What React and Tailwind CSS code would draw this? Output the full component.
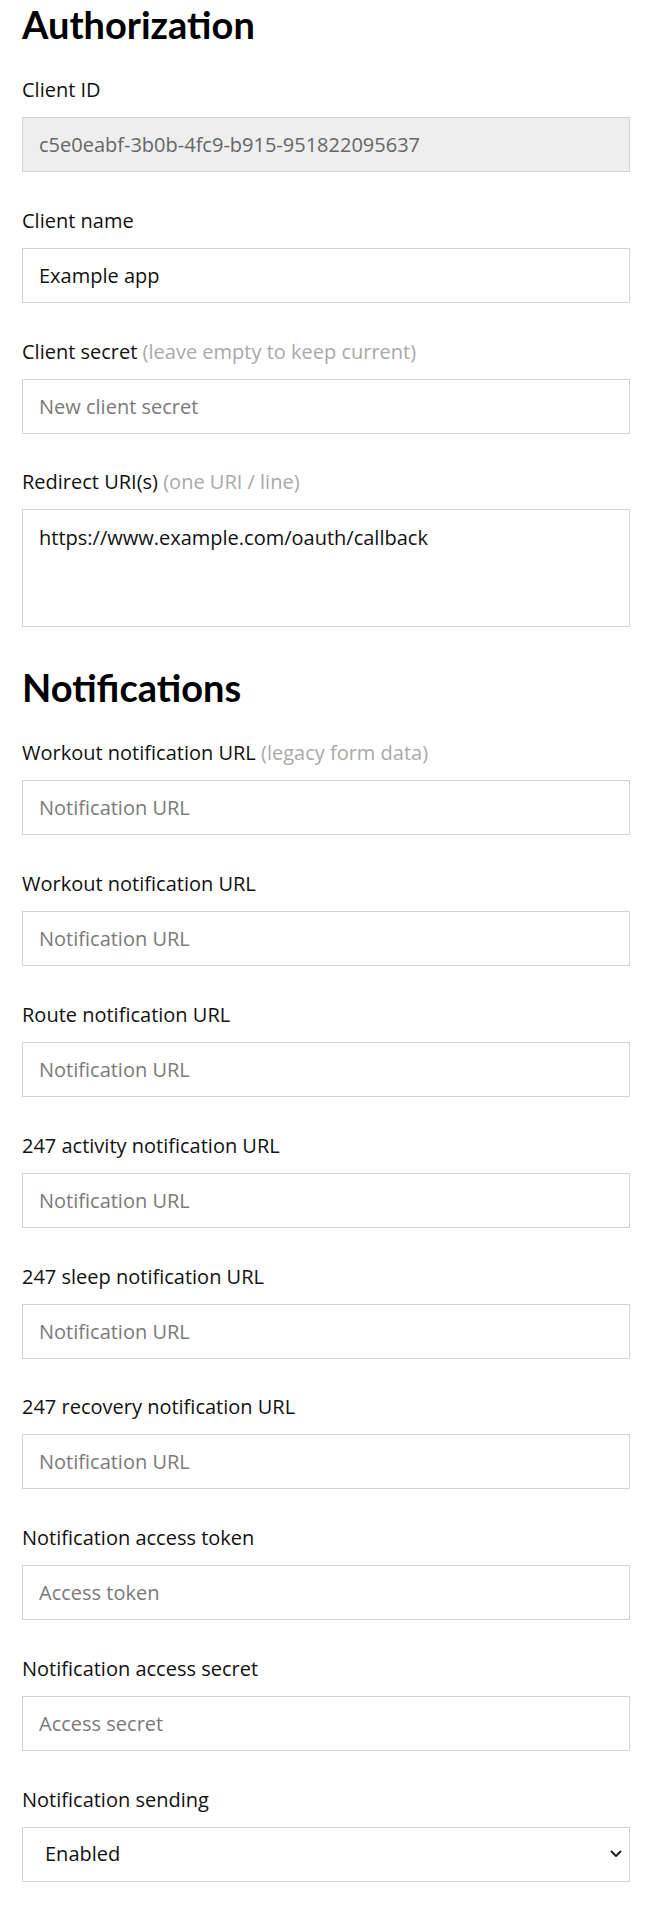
import React from "react";

const baseCls =
  "block w-full h-[55px] border border-[#d3d3d3] px-4 text-[20px] placeholder:text-[#7a7a7a] outline-none font-['Open_Sans',sans-serif]";

function Label({ children, hint }) {
  return (
    <label className="block leading-[30px] text-[20px] text-[#111]">
      {children}
      {hint ? <span className="text-[#a9a9a9]"> {hint}</span> : null}
    </label>
  );
}

function Field({ label, hint, placeholder, value, disabled }) {
  return (
    <div className="flex flex-col gap-3">
      <Label hint={hint}>{label}</Label>
      <input
        className={
          baseCls +
          (disabled ? " bg-[#eeeeee] text-[#666666]" : " bg-white text-[#111]")
        }
        placeholder={placeholder}
        defaultValue={value}
        readOnly={disabled}
      />
    </div>
  );
}

export default function App() {
  const notif = [
    { label: "Workout notification URL", hint: "(legacy form data)", placeholder: "Notification URL" },
    { label: "Workout notification URL", placeholder: "Notification URL" },
    { label: "Route notification URL", placeholder: "Notification URL" },
    { label: "247 activity notification URL", placeholder: "Notification URL" },
    { label: "247 sleep notification URL", placeholder: "Notification URL" },
    { label: "247 recovery notification URL", placeholder: "Notification URL" },
    { label: "Notification access token", placeholder: "Access token" },
    { label: "Notification access secret", placeholder: "Access secret" },
  ];
  return (
    <div className="min-h-[1909px] bg-white px-[22px] pb-[29px] font-['Open_Sans',sans-serif] text-[20px] text-[#111]">
      <h1 className="font-['Lato',sans-serif] text-[38px] font-bold leading-[48px] text-black">
        Authorization
      </h1>
      <div className="mt-[27px] flex flex-col gap-y-[33.8px]">
        <Field label="Client ID" value="c5e0eabf-3b0b-4fc9-b915-951822095637" disabled />
        <Field label="Client name" value="Example app" />
        <Field label="Client secret" hint="(leave empty to keep current)" placeholder="New client secret" />
        <div className="flex flex-col gap-3">
          <Label hint="(one URI / line)">Redirect URI(s)</Label>
          <textarea
            className="block h-[118px] w-full resize-none border border-[#d3d3d3] bg-white px-4 py-[13px] text-[20px] leading-[30px] text-[#111] outline-none font-['Open_Sans',sans-serif]"
            defaultValue="https://www.example.com/oauth/callback"
          />
        </div>
      </div>
      <h1 className="mt-[36px] font-['Lato',sans-serif] text-[38px] font-bold leading-[48px] text-black">
        Notifications
      </h1>
      <div className="mt-[27px] flex flex-col gap-y-[33.8px]">
        {notif.map((f, i) => (
          <Field key={i} label={f.label} hint={f.hint} placeholder={f.placeholder} />
        ))}
        <div className="flex flex-col gap-3">
          <Label>Notification sending</Label>
          <div className="relative">
            <select
              className="block h-[55px] w-full appearance-none border border-[#d3d3d3] bg-white pl-[22px] pr-10 text-[20px] text-[#111] outline-none font-['Open_Sans',sans-serif]"
              defaultValue="enabled"
            >
              <option value="enabled">Enabled</option>
              <option value="disabled">Disabled</option>
            </select>
            <svg
              className="pointer-events-none absolute right-[8px] top-[23px]"
              width="12"
              height="7"
              viewBox="0 0 12 7"
              fill="none"
            >
              <path d="M1 1l5 5 5-5" stroke="#222" strokeWidth="2" />
            </svg>
          </div>
        </div>
      </div>
    </div>
  );
}
